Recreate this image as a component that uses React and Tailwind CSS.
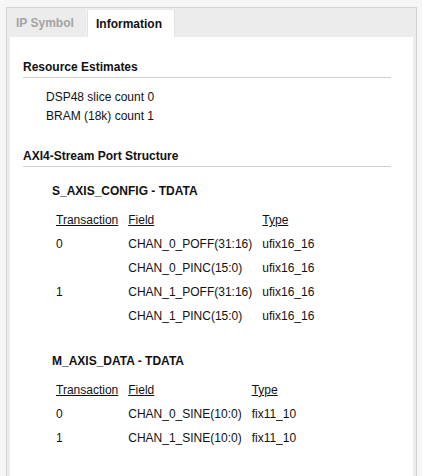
const resources = ['DSP48 slice count 0', 'BRAM (18k) count 1'];

const configRows = [
  ['0', 'CHAN_0_POFF(31:16)', 'ufix16_16'],
  ['', 'CHAN_0_PINC(15:0)', 'ufix16_16'],
  ['1', 'CHAN_1_POFF(31:16)', 'ufix16_16'],
  ['', 'CHAN_1_PINC(15:0)', 'ufix16_16'],
];

const dataRows = [
  ['0', 'CHAN_0_SINE(10:0)', 'fix11_10'],
  ['1', 'CHAN_1_SINE(10:0)', 'fix11_10'],
];

const SectionTitle = ({ children, className = '' }) => (
  <div className={`mr-[22px] border-b border-[#cfcfcf] pb-[2px] text-[12px] font-bold leading-[16px] ${className}`}>
    {children}
  </div>
);

const PortTable = ({ title, rows, className = '' }) => (
  <div className={`pl-[29px] ${className}`}>
    <div className="text-[12px] font-bold leading-[16px]">{title}</div>
    <div className="mt-[9px] grid grid-cols-[auto_auto_auto] justify-start gap-x-[10px] pl-[4px] text-[12px] leading-[24px]">
      <span className="underline underline-offset-[1px]">Transaction</span>
      <span className="underline underline-offset-[1px]">Field</span>
      <span className="underline underline-offset-[1px]">Type</span>
      {rows.map(([t, f, ty], i) => (
        <div key={i} className="contents">
          <span>{t}</span>
          <span>{f}</span>
          <span>{ty}</span>
        </div>
      ))}
    </div>
  </div>
);

const App = () => {
  return (
    <div
      className="h-[476px] w-[422px] overflow-hidden bg-[#f6f6f6] pl-[6px] pr-[5px] pt-[7px] text-[#111]"
      style={{ fontFamily: '"Liberation Sans", Arial, sans-serif' }}
    >
      <div className="flex h-[500px] flex-col border border-[#d2d2d2] bg-[#ececec]">
        {/* Tabs */}
        <div className="flex h-[29px] items-end">
          <div className="flex h-full w-[80px] items-center border-r border-[#f4f4f4] pl-[9px] text-[12px] font-bold text-[#a3a3a3]">
            IP Symbol
          </div>
          <div className="flex h-[27px] w-[88px] items-center border-x border-[#e2e2e2] bg-white pl-[8px] text-[12px] font-bold">
            Information
          </div>
        </div>

        {/* Content */}
        <div className="mx-[3px] flex-1 bg-white pl-[13px] pt-[22px]">
          <SectionTitle>Resource Estimates</SectionTitle>
          <div className="mt-[10px] pl-[23px] text-[12px] leading-[19px]">
            {resources.map((r) => (
              <div key={r}>{r}</div>
            ))}
          </div>

          <SectionTitle className="mt-[22px]">AXI4-Stream Port Structure</SectionTitle>
          <PortTable className="mt-[16px]" title="S_AXIS_CONFIG - TDATA" rows={configRows} />
          <PortTable className="mt-[25px]" title="M_AXIS_DATA - TDATA" rows={dataRows} />
        </div>
      </div>
    </div>
  );
};

export default App;
